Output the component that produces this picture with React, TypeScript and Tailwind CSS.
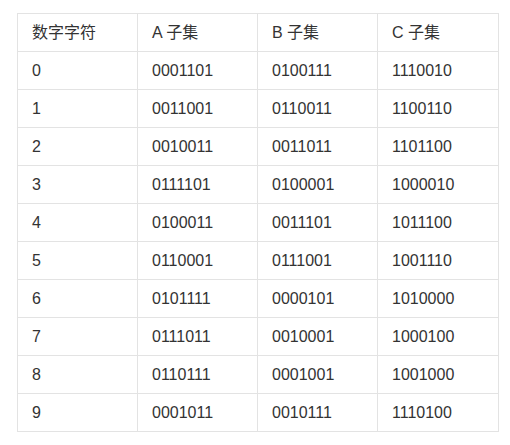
import React from "react";

const rows: [string, string, string, string][] = [
  ["0", "0001101", "0100111", "1110010"],
  ["1", "0011001", "0110011", "1100110"],
  ["2", "0010011", "0011011", "1101100"],
  ["3", "0111101", "0100001", "1000010"],
  ["4", "0100011", "0011101", "1011100"],
  ["5", "0110001", "0111001", "1001110"],
  ["6", "0101111", "0000101", "1010000"],
  ["7", "0111011", "0010001", "1000100"],
  ["8", "0110111", "0001001", "1001000"],
  ["9", "0001011", "0010111", "1110100"],
];

const headers = ["数字字符", "A 子集", "B 子集", "C 子集"];

export default function App() {
  return (
    <div
      className="w-[510px] h-[445px] bg-white pt-[13px] pl-[17px] text-[#333333] text-[16px]"
      style={{ fontFamily: '"Liberation Sans", Arial, "Noto Sans CJK SC", sans-serif' }}
    >
      <table className="border-collapse table-fixed w-[481px]">
        <colgroup>
          <col className="w-[120px]" />
          <col className="w-[120px]" />
          <col className="w-[120px]" />
          <col className="w-[121px]" />
        </colgroup>
        <thead>
          <tr>
            {headers.map((h) => (
              <th
                key={h}
                className="border border-[#e3e3e3] px-[14px] py-[8px] leading-[21px] text-left font-normal"
              >
                {h}
              </th>
            ))}
          </tr>
        </thead>
        <tbody>
          {rows.map((r) => (
            <tr key={r[0]}>
              {r.map((c, i) => (
                <td
                  key={i}
                  className="border border-[#e3e3e3] px-[14px] py-[8px] leading-[21px]"
                >
                  {c}
                </td>
              ))}
            </tr>
          ))}
        </tbody>
      </table>
    </div>
  );
}
